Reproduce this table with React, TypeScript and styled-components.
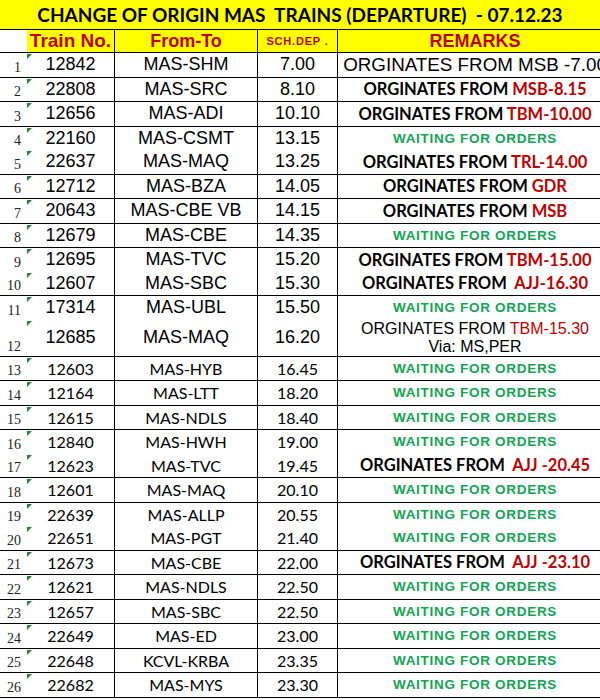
import styled, { createGlobalStyle } from "styled-components";

const arial = '"Liberation Sans", Arial, sans-serif';
const calibri = 'Lato, "Open Sans", sans-serif';
const red = "#c00000";
const green = "#12a552";

const GlobalStyle = createGlobalStyle`
  html, body { margin: 0; padding: 0; background: #fff; }
  body { width: 600px; height: 700px; overflow: hidden; }
`;

type Remark =
  | { kind: "wait" }
  | { kind: "plain"; text: string }
  | { kind: "orig"; from: string }
  | { kind: "via"; from: string; via: string };

type Train = {
  n: number;
  no: string;
  route: string;
  dep: string;
  remark: Remark;
  h?: number;
};

const wait: Remark = { kind: "wait" };
const orig = (from: string): Remark => ({ kind: "orig", from });

// each inner array is one bordered block on the sheet
const groups: Train[][] = [
  [{ n: 1, no: "12842", route: "MAS-SHM", dep: "7.00", remark: { kind: "plain", text: "ORGINATES FROM MSB -7.00" } }],
  [{ n: 2, no: "22808", route: "MAS-SRC", dep: "8.10", remark: orig("MSB-8.15") }],
  [{ n: 3, no: "12656", route: "MAS-ADI", dep: "10.10", remark: orig("TBM-10.00") }],
  [
    { n: 4, no: "22160", route: "MAS-CSMT", dep: "13.15", remark: wait },
    { n: 5, no: "22637", route: "MAS-MAQ", dep: "13.25", remark: orig("TRL-14.00") },
  ],
  [{ n: 6, no: "12712", route: "MAS-BZA", dep: "14.05", remark: orig("GDR") }],
  [{ n: 7, no: "20643", route: "MAS-CBE VB", dep: "14.15", remark: orig("MSB") }],
  [{ n: 8, no: "12679", route: "MAS-CBE", dep: "14.35", remark: wait }],
  [
    { n: 9, no: "12695", route: "MAS-TVC", dep: "15.20", remark: orig("TBM-15.00") },
    { n: 10, no: "12607", route: "MAS-SBC", dep: "15.30", remark: orig(" AJJ-16.30") },
  ],
  [
    { n: 11, no: "17314", route: "MAS-UBL", dep: "15.50", remark: wait },
    { n: 12, no: "12685", route: "MAS-MAQ", dep: "16.20", remark: { kind: "via", from: "TBM-15.30", via: "Via: MS,PER" }, h: 36 },
  ],
  [{ n: 13, no: "12603", route: "MAS-HYB", dep: "16.45", remark: wait }],
  [{ n: 14, no: "12164", route: "MAS-LTT", dep: "18.20", remark: wait }],
  [{ n: 15, no: "12615", route: "MAS-NDLS", dep: "18.40", remark: wait }],
  [
    { n: 16, no: "12840", route: "MAS-HWH", dep: "19.00", remark: wait },
    { n: 17, no: "12623", route: "MAS-TVC", dep: "19.45", remark: orig(" AJJ -20.45") },
  ],
  [{ n: 18, no: "12601", route: "MAS-MAQ", dep: "20.10", remark: wait }],
  [
    { n: 19, no: "22639", route: "MAS-ALLP", dep: "20.55", remark: wait },
    { n: 20, no: "22651", route: "MAS-PGT", dep: "21.40", remark: wait },
  ],
  [{ n: 21, no: "12673", route: "MAS-CBE", dep: "22.00", remark: orig(" AJJ -23.10") }],
  [{ n: 22, no: "12621", route: "MAS-NDLS", dep: "22.50", remark: wait }],
  [{ n: 23, no: "12657", route: "MAS-SBC", dep: "22.50", remark: wait }],
  [{ n: 24, no: "22649", route: "MAS-ED", dep: "23.00", remark: wait }],
  [{ n: 25, no: "22648", route: "KCVL-KRBA", dep: "23.35", remark: wait }],
  [{ n: 26, no: "22682", route: "MAS-MYS", dep: "23.30", remark: wait }],
];

const Sheet = styled.div`
  width: 600px;
  height: 700px;
  overflow: hidden;
  background: #fff;
`;

const Table = styled.div`
  width: 612px;
`;

const Title = styled.div`
  height: 29px;
  background: #ffff00;
  width: 600px;
  display: flex;
  align-items: center;
  justify-content: center;
  font-family: ${calibri};
  font-weight: 700;
  font-size: 19px;
  color: #000;
  white-space: pre;
`;

const cols = "27px 88px 143px 80px 274px";

const HeadRow = styled.div`
  display: grid;
  grid-template-columns: ${cols};
  height: 24px;
  border-top: 1px solid #000;
  border-bottom: 1px solid #000;
  box-sizing: border-box;
`;

const HeadCell = styled.div<{ $size: number; $line?: boolean; $blank?: boolean; $spacing?: number }>`
  display: flex;
  align-items: center;
  justify-content: center;
  background: ${(p) => (p.$blank ? "#fff" : "#ffff00")};
  border-right: ${(p) => (p.$line ? "1px solid #000" : "none")};
  font-family: ${arial};
  font-weight: 700;
  font-size: ${(p) => p.$size}px;
  letter-spacing: ${(p) => p.$spacing ?? 0}px;
  color: ${red};
  white-space: pre;
`;

const Group = styled.div`
  border-bottom: 1px solid #000;
`;

const SubRow = styled.div<{ $h: number }>`
  display: grid;
  grid-template-columns: ${cols};
  height: ${(p) => p.$h}px;
`;

const Num = styled.div`
  display: flex;
  align-items: flex-end;
  justify-content: flex-end;
  padding: 0 6px 2px 0;
  font-family: "Liberation Serif", serif;
  font-size: 14px;
  line-height: 1;
  color: #222;
`;

const Cell = styled.div<{ $cal?: boolean; $line?: boolean }>`
  position: relative;
  display: flex;
  align-items: center;
  justify-content: center;
  border-right: ${(p) => (p.$line ? "1px solid #000" : "none")};
  font-family: ${(p) => (p.$cal ? calibri : arial)};
  font-size: ${(p) => (p.$cal ? 16 : 18)}px;
  color: #000;
  white-space: nowrap;
`;

const Flag = styled.span`
  position: absolute;
  left: 0;
  top: 1px;
  width: 0;
  height: 0;
  border-top: 5px solid #1e8a2a;
  border-right: 5px solid transparent;
`;

const RemarkCell = styled.div`
  display: flex;
  flex-direction: column;
  align-items: center;
  justify-content: center;
  white-space: pre;
  color: #000;
`;

const Plain = styled.span<{ $size: number }>`
  font-family: ${arial};
  font-size: ${(p) => p.$size}px;
  line-height: 1.15;
`;

const Waiting = styled.span`
  font-family: ${arial};
  font-weight: 700;
  font-size: 13.5px;
  letter-spacing: 0.7px;
  color: ${green};
`;

const Orig = styled.span`
  font-family: ${calibri};
  font-weight: 700;
  font-size: 16.5px;
`;

const Red = styled.span<{ $bold?: boolean }>`
  color: ${red};
  font-weight: ${(p) => (p.$bold ? 700 : 400)};
`;

const RemarkView = ({ r }: { r: Remark }) => {
  switch (r.kind) {
    case "wait":
      return <Waiting>WAITING FOR ORDERS</Waiting>;
    case "plain":
      return <Plain $size={18.8}>{r.text}</Plain>;
    case "orig":
      return (
        <Orig>
          ORGINATES FROM <Red $bold>{r.from}</Red>
        </Orig>
      );
    case "via":
      return (
        <>
          <Plain $size={16}>
            ORGINATES FROM <Red>{r.from}</Red>
          </Plain>
          <Plain $size={16}>{r.via}</Plain>
        </>
      );
  }
};

const App = () => {
  return (
    <Sheet>
      <GlobalStyle />
      <Title>CHANGE OF ORIGIN MAS  TRAINS (DEPARTURE)  - 07.12.23</Title>
      <Table>
        <HeadRow>
          <HeadCell $size={18} $blank />
          <HeadCell $size={19} $line>Train No.</HeadCell>
          <HeadCell $size={18} $line>From-To</HeadCell>
          <HeadCell $size={11} $line $spacing={0.8}>SCH.DEP .</HeadCell>
          <HeadCell $size={18}>REMARKS</HeadCell>
        </HeadRow>
        {groups.map((g, i) => (
          <Group key={i}>
            {g.map((t) => {
              const cal = t.n >= 13;
              return (
                <SubRow key={t.n} $h={t.h ?? 23.5}>
                  <Num>{t.n}</Num>
                  <Cell $cal={cal} $line>
                    <Flag />
                    {t.no}
                  </Cell>
                  <Cell $cal={cal} $line>{t.route}</Cell>
                  <Cell $cal={cal} $line>{t.dep}</Cell>
                  <RemarkCell>
                    <RemarkView r={t.remark} />
                  </RemarkCell>
                </SubRow>
              );
            })}
          </Group>
        ))}
      </Table>
    </Sheet>
  );
};

export default App;
